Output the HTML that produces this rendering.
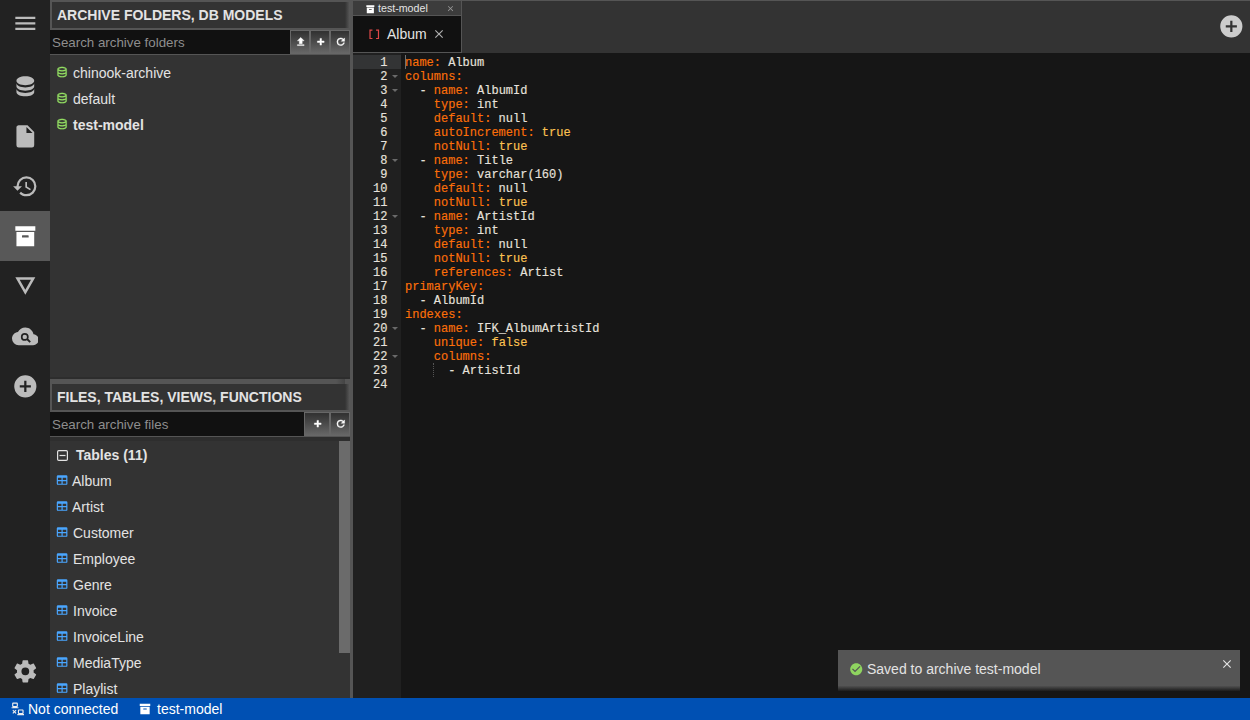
<!DOCTYPE html>
<html><head><meta charset="utf-8">
<style>
*{box-sizing:border-box;margin:0;padding:0}
html,body{width:1250px;height:720px;overflow:hidden;background:#333;font-family:"Liberation Sans",sans-serif;font-size:14px;color:#e3e3e3}
.abs{position:absolute}
svg{display:block}
#iconbar{left:0;top:0;width:50px;height:698px;background:#222}
.ib{position:absolute;left:0;width:50px;height:50px}
.ib svg{position:absolute;left:11.67px;top:11.67px;width:26.67px;height:26.67px;fill:#bbb}
#left{left:50px;top:0;width:300px;height:698px;background:#333}
.wtitle{position:absolute;left:0;width:300px;height:30px;border:2px solid #555;background:#333;font-weight:bold;text-transform:uppercase;padding-left:5px;line-height:26px;color:#e3e3e3}
.search{position:absolute;left:0;height:24px;background:#111;color:#8e8e8e;padding-left:2px;padding-top:1px;line-height:23px;font-size:13.33px}
.ibtn{position:absolute;height:24px;border:1px solid #676767;background:linear-gradient(to bottom,#333 5%,#676767 100%)}
.ibtn svg{position:absolute;width:14px;height:14px;fill:#fff;stroke:#fff;stroke-width:0.9px}
.item{position:absolute;left:0;height:26px;line-height:26px;white-space:nowrap}
.item svg{position:absolute;top:6.67px;width:13.33px;height:13.33px}
.dbi{fill:#92dc62;stroke:#92dc62;stroke-width:0.3px}
.tbi{fill:#4aa6ff}
svg.tbi{width:14.2px!important;height:14.2px!important}
svg.dbi{width:14.1px!important;height:14.1px!important}
#splitter{left:350px;top:0;width:3px;height:698px;background:#555}
#tabs{left:353px;top:0;width:897px;height:53px;background:#333;border-top:1px solid #555}
#editor{left:353px;top:53px;width:897px;height:645px;background:#161616}
#gutter{left:0;top:0;width:47.5px;height:645px;background:#202020}
.code{font-family:"Liberation Mono",monospace;font-size:12px;color:#e6e1dc;-webkit-text-stroke:0.15px}
.cl{position:absolute;left:52px;height:14px;line-height:16px;white-space:pre}
.k{color:#fc6f09}
.b{color:#fdc251}

.ln{position:absolute;left:0;width:47.5px;height:14px;line-height:14px}
.ln span{position:absolute;right:13px;line-height:16px}
.ln.act{background:#333435}
.fw{position:absolute;left:39px;top:6px;width:0;height:0;border-left:3px solid transparent;border-right:3px solid transparent;border-top:3.5px solid #6a6a6a}
#toast{left:838px;top:650px;width:402px;height:36px;background:#555;color:#e3e3e3}
#toastsh{left:838px;top:686px;width:402px;height:5px;background:linear-gradient(to bottom,#505050,#1c1c1c)}

#status{left:0;top:698px;width:1250px;height:22px;background:#0050b3;color:#fff}
</style></head><body>

<div id="iconbar" class="abs">
  <div class="ib" style="top:-1.2px"><svg viewBox="0 0 24 24"><path d="M3,6H21V8H3V6M3,11H21V13H3V11M3,16H21V18H3V16Z"/></svg></div>
  <div class="ib" style="top:61px"><svg viewBox="0 0 24 24"><path d="M12,3C7.58,3 4,4.79 4,7C4,9.21 7.58,11 12,11C16.42,11 20,9.21 20,7C20,4.79 16.42,3 12,3M4,9V12C4,14.21 7.58,16 12,16C16.42,16 20,14.21 20,12V9C20,11.21 16.42,13 12,13C7.58,13 4,11.21 4,9M4,14V17C4,19.21 7.58,21 12,21C16.42,21 20,19.21 20,17V14C20,16.21 16.42,18 12,18C7.58,18 4,16.21 4,14Z"/></svg></div>
  <div class="ib" style="top:111px"><svg viewBox="0 0 24 24"><path d="M13,9V3.5L18.5,9M6,2C4.89,2 4,2.89 4,4V20A2,2 0 0,0 6,22H18A2,2 0 0,0 20,20V8L14,2H6Z"/></svg></div>
  <div class="ib" style="top:161px"><svg viewBox="0 0 24 24"><path d="M13.5,8H12V13L16.28,15.54L17,14.33L13.5,12.25V8M13,3A9,9 0 0,0 4,12H1L4.96,16.03L9,12H6A7,7 0 0,1 13,5A7,7 0 0,1 20,12A7,7 0 0,1 13,19C11.07,19 9.32,18.21 8.06,16.94L6.64,18.36C8.27,20 10.5,21 13,21A9,9 0 0,0 22,12A9,9 0 0,0 13,3"/></svg></div>
  <div class="ib" style="top:211px;background:#585858"><svg viewBox="0 0 24 24" style="fill:#fff"><path d="M3,3H21V7H3V3M4,8H20V21H4V8M9.5,11A0.5,0.5 0 0,0 9,11.5V13H15V11.5A0.5,0.5 0 0,0 14.5,11H9.5Z"/></svg></div>
  <div class="ib" style="top:261px"><svg viewBox="0 0 24 24"><path d="M3,3.9H21L12,19.56Z M6.89,6.15L12,15.04L17.11,6.15Z" fill-rule="evenodd"/></svg></div>
  <div class="ib" style="top:311px"><svg viewBox="0 0 24 24"><path d="M12,4C15.64,4 18.67,6.59 19.35,10.04C21.95,10.22 24,12.36 24,15A5,5 0 0,1 19,20H6A6,6 0 0,1 0,14C0,10.91 2.34,8.36 5.35,8.04C6.6,5.64 9.11,4 12,4M11.5,9A3.5,3.5 0 0,0 8,12.5A3.5,3.5 0 0,0 11.5,16C12.2,16 12.86,15.79 13.42,15.43L15.8,17.8L17,16.6L14.62,14.23C14.86,13.7 15,13.12 15,12.5A3.5,3.5 0 0,0 11.5,9M11.5,10.5A2,2 0 0,1 13.5,12.5A2,2 0 0,1 11.5,14.5A2,2 0 0,1 9.5,12.5A2,2 0 0,1 11.5,10.5Z"/></svg></div>
  <div class="ib" style="top:361px"><svg viewBox="0 0 24 24"><path d="M17,13H13V17H11V13H7V11H11V7H13V11H17M12,2A10,10 0 0,0 2,12A10,10 0 0,0 12,22A10,10 0 0,0 22,12A10,10 0 0,0 12,2Z"/></svg></div>
  <div class="ib" style="top:646px"><svg viewBox="0 0 24 24"><path d="M12,15.5A3.5,3.5 0 0,1 8.5,12A3.5,3.5 0 0,1 12,8.5A3.5,3.5 0 0,1 15.5,12A3.5,3.5 0 0,1 12,15.5M19.43,12.97C19.47,12.65 19.5,12.33 19.5,12C19.5,11.67 19.47,11.34 19.43,11L21.54,9.37C21.73,9.22 21.78,8.95 21.66,8.73L19.66,5.27C19.54,5.05 19.27,4.96 19.05,5.05L16.56,6.05C16.04,5.66 15.5,5.32 14.87,5.07L14.5,2.42C14.46,2.18 14.25,2 14,2H10C9.750,2 9.54,2.18 9.5,2.42L9.13,5.07C8.5,5.32 7.96,5.66 7.44,6.05L4.95,5.05C4.73,4.96 4.46,5.05 4.34,5.27L2.34,8.73C2.21,8.95 2.27,9.22 2.46,9.37L4.57,11C4.53,11.34 4.5,11.67 4.5,12C4.5,12.33 4.53,12.65 4.57,12.97L2.46,14.63C2.27,14.78 2.21,15.05 2.34,15.27L4.34,18.73C4.46,18.95 4.73,19.030 4.95,18.95L7.44,17.94C7.96,18.34 8.5,18.68 9.13,18.93L9.5,21.58C9.54,21.82 9.75,22 10,22H14C14.25,22 14.46,21.82 14.5,21.58L14.87,18.93C15.5,18.67 16.04,18.34 16.56,17.94L19.05,18.95C19.27,19.03 19.54,18.95 19.66,18.73L21.66,15.27C21.78,15.05 21.73,14.78 21.54,14.63L19.43,12.97Z"/></svg></div>
</div>

<div id="left" class="abs">
  <div class="wtitle" style="top:0">Archive folders, DB models</div>
  <div class="search" style="top:30px;width:240px">Search archive folders</div>
  <div class="abs" style="left:0;top:54px;width:300px;height:1px;background:#555"></div>
  <div class="ibtn" style="left:240px;top:30px;width:20px"><svg viewBox="0 0 24 24" style="left:4.05px;top:4.6px;width:11.5px;height:11.5px"><path d="M9,16V10H5L12,3L19,10H15V16H9M5,20V18H19V20H5Z"/></svg></div>
  <div class="ibtn" style="left:260px;top:30px;width:20px"><svg viewBox="0 0 24 24" style="left:4.05px;top:4.6px;width:11.5px;height:11.5px"><path d="M19,13.6H13.6V19H10.4V13.6H5V10.4H10.4V5H13.6V10.4H19V13.6Z"/></svg></div>
  <div class="ibtn" style="left:280px;top:30px;width:20px"><svg viewBox="0 0 24 24" style="left:4.05px;top:4.6px;width:11.5px;height:11.5px"><path d="M17.65,6.35C16.2,4.9 14.21,4 12,4A8,8 0 0,0 4,12A8,8 0 0,0 12,20C15.73,20 18.84,17.45 19.73,14H17.65C16.83,16.33 14.61,18 12,18A6,6 0 0,1 6,12A6,6 0 0,1 12,6C13.66,6 15.14,6.69 16.22,7.78L13,11H20V4L17.65,6.35Z"/></svg></div>
  <div class="item" style="top:60px;left:23px"><svg viewBox="0 0 24 24" class="dbi" style="left:-18.45px;top:5.35px"><path d="M12,3C7.58,3 4,4.79 4,7V17C4,19.21 7.59,21 12,21C16.41,21 20,19.21 20,17V7C20,4.79 16.42,3 12,3M18,17C18,17.5 15.87,19 12,19C8.13,19 6,17.5 6,17V14.77C7.61,15.55 9.72,16 12,16C14.28,16 16.39,15.55 18,14.77V17M18,12.45C16.7,13.4 14.42,14 12,14C9.58,14 7.3,13.4 6,12.45V9.64C7.47,10.47 9.61,11 12,11C14.39,11 16.53,10.47 18,9.64V12.45M12,9C8.13,9 6,7.5 6,7C6,6.5 8.13,5 12,5C15.87,5 18,6.5 18,7C18,7.5 15.87,9 12,9Z"/></svg>chinook-archive</div>
  <div class="item" style="top:86px;left:23px"><svg viewBox="0 0 24 24" class="dbi" style="left:-18.45px;top:5.35px"><path d="M12,3C7.58,3 4,4.79 4,7V17C4,19.21 7.59,21 12,21C16.41,21 20,19.21 20,17V7C20,4.79 16.42,3 12,3M18,17C18,17.5 15.87,19 12,19C8.13,19 6,17.5 6,17V14.77C7.61,15.55 9.72,16 12,16C14.28,16 16.39,15.55 18,14.77V17M18,12.45C16.7,13.4 14.42,14 12,14C9.58,14 7.3,13.4 6,12.45V9.64C7.47,10.47 9.61,11 12,11C14.39,11 16.53,10.47 18,9.64V12.45M12,9C8.13,9 6,7.5 6,7C6,6.5 8.13,5 12,5C15.87,5 18,6.5 18,7C18,7.5 15.87,9 12,9Z"/></svg>default</div>
  <div class="item" style="top:112px;left:23px;font-weight:bold"><svg viewBox="0 0 24 24" class="dbi" style="left:-18.45px;top:5.35px"><path d="M12,3C7.58,3 4,4.79 4,7V17C4,19.21 7.59,21 12,21C16.41,21 20,19.21 20,17V7C20,4.79 16.42,3 12,3M18,17C18,17.5 15.87,19 12,19C8.13,19 6,17.5 6,17V14.77C7.61,15.55 9.72,16 12,16C14.28,16 16.39,15.55 18,14.77V17M18,12.45C16.7,13.4 14.42,14 12,14C9.58,14 7.3,13.4 6,12.45V9.64C7.47,10.47 9.61,11 12,11C14.39,11 16.53,10.47 18,9.64V12.45M12,9C8.13,9 6,7.5 6,7C6,6.5 8.13,5 12,5C15.87,5 18,6.5 18,7C18,7.5 15.87,9 12,9Z"/></svg>test-model</div>
  <div class="abs" style="left:0;top:377px;width:300px;height:2px;background:#2d2d2d"></div>
  <div class="abs" style="left:0;top:379px;width:300px;height:3px;background:#555"></div>
  <div class="wtitle" style="top:382px">Files, tables, views, functions</div>
  <div class="search" style="top:412px;width:254px">Search archive files</div>
  <div class="abs" style="left:0;top:436px;width:300px;height:1px;background:#555"></div>
  <div class="abs" style="left:0;top:437px;width:300px;height:4px;background:#2e2e2e"></div>
  <div class="ibtn" style="left:254px;top:412px;width:26px"><svg viewBox="0 0 24 24" style="left:7.05px;top:4.6px;width:11.5px;height:11.5px"><path d="M19,13.6H13.6V19H10.4V13.6H5V10.4H10.4V5H13.6V10.4H19V13.6Z"/></svg></div>
  <div class="ibtn" style="left:280px;top:412px;width:20px"><svg viewBox="0 0 24 24" style="left:4.05px;top:4.6px;width:11.5px;height:11.5px"><path d="M17.65,6.35C16.2,4.9 14.21,4 12,4A8,8 0 0,0 4,12A8,8 0 0,0 12,20C15.73,20 18.84,17.45 19.73,14H17.65C16.83,16.33 14.61,18 12,18A6,6 0 0,1 6,12A6,6 0 0,1 12,6C13.66,6 15.14,6.69 16.22,7.78L13,11H20V4L17.65,6.35Z"/></svg></div>
  <div class="item" style="top:442px;left:26px;font-weight:bold"><svg style="left:-19px;top:7.5px;width:11px;height:11px" viewBox="0 0 11 11"><rect x="0.6" y="0.6" width="9.8" height="9.8" rx="1.2" fill="none" stroke="#e3e3e3" stroke-width="1.2"/><rect x="2.5" y="4.9" width="6" height="1.2" fill="#e3e3e3"/></svg>Tables (11)</div>
  <div class="item" style="top:468px;left:22px"><svg viewBox="0 0 24 24" class="tbi" style="left:-17.2px;top:5.3px"><path d="M5,4H19A2,2 0 0,1 21,6V18A2,2 0 0,1 19,20H5A2,2 0 0,1 3,18V6A2,2 0 0,1 5,4M5,8V12H11V8H5M13,8V12H19V8H13M5,14V18H11V14H5M13,14V18H19V14H13Z"/></svg>Album</div>
  <div class="item" style="top:494px;left:22px"><svg viewBox="0 0 24 24" class="tbi" style="left:-17.2px;top:5.3px"><path d="M5,4H19A2,2 0 0,1 21,6V18A2,2 0 0,1 19,20H5A2,2 0 0,1 3,18V6A2,2 0 0,1 5,4M5,8V12H11V8H5M13,8V12H19V8H13M5,14V18H11V14H5M13,14V18H19V14H13Z"/></svg>Artist</div>
  <div class="item" style="top:520px;left:23px"><svg viewBox="0 0 24 24" class="tbi" style="left:-18.2px;top:5.3px"><path d="M5,4H19A2,2 0 0,1 21,6V18A2,2 0 0,1 19,20H5A2,2 0 0,1 3,18V6A2,2 0 0,1 5,4M5,8V12H11V8H5M13,8V12H19V8H13M5,14V18H11V14H5M13,14V18H19V14H13Z"/></svg>Customer</div>
  <div class="item" style="top:546px;left:23px"><svg viewBox="0 0 24 24" class="tbi" style="left:-18.2px;top:5.3px"><path d="M5,4H19A2,2 0 0,1 21,6V18A2,2 0 0,1 19,20H5A2,2 0 0,1 3,18V6A2,2 0 0,1 5,4M5,8V12H11V8H5M13,8V12H19V8H13M5,14V18H11V14H5M13,14V18H19V14H13Z"/></svg>Employee</div>
  <div class="item" style="top:572px;left:23px"><svg viewBox="0 0 24 24" class="tbi" style="left:-18.2px;top:5.3px"><path d="M5,4H19A2,2 0 0,1 21,6V18A2,2 0 0,1 19,20H5A2,2 0 0,1 3,18V6A2,2 0 0,1 5,4M5,8V12H11V8H5M13,8V12H19V8H13M5,14V18H11V14H5M13,14V18H19V14H13Z"/></svg>Genre</div>
  <div class="item" style="top:598px;left:23px"><svg viewBox="0 0 24 24" class="tbi" style="left:-18.2px;top:5.3px"><path d="M5,4H19A2,2 0 0,1 21,6V18A2,2 0 0,1 19,20H5A2,2 0 0,1 3,18V6A2,2 0 0,1 5,4M5,8V12H11V8H5M13,8V12H19V8H13M5,14V18H11V14H5M13,14V18H19V14H13Z"/></svg>Invoice</div>
  <div class="item" style="top:624px;left:23px"><svg viewBox="0 0 24 24" class="tbi" style="left:-18.2px;top:5.3px"><path d="M5,4H19A2,2 0 0,1 21,6V18A2,2 0 0,1 19,20H5A2,2 0 0,1 3,18V6A2,2 0 0,1 5,4M5,8V12H11V8H5M13,8V12H19V8H13M5,14V18H11V14H5M13,14V18H19V14H13Z"/></svg>InvoiceLine</div>
  <div class="item" style="top:650px;left:23px"><svg viewBox="0 0 24 24" class="tbi" style="left:-18.2px;top:5.3px"><path d="M5,4H19A2,2 0 0,1 21,6V18A2,2 0 0,1 19,20H5A2,2 0 0,1 3,18V6A2,2 0 0,1 5,4M5,8V12H11V8H5M13,8V12H19V8H13M5,14V18H11V14H5M13,14V18H19V14H13Z"/></svg>MediaType</div>
  <div class="item" style="top:676px;left:23px"><svg viewBox="0 0 24 24" class="tbi" style="left:-18.2px;top:5.3px"><path d="M5,4H19A2,2 0 0,1 21,6V18A2,2 0 0,1 19,20H5A2,2 0 0,1 3,18V6A2,2 0 0,1 5,4M5,8V12H11V8H5M13,8V12H19V8H13M5,14V18H11V14H5M13,14V18H19V14H13Z"/></svg>Playlist</div>
  <div class="abs" style="left:289px;top:441px;width:11px;height:212px;background:#6b6b6b"></div>
  <div class="abs" style="left:295px;top:2px;width:5px;height:26px;background:linear-gradient(to right,#333,#5a5a5a)"></div>
  <div class="abs" style="left:295px;top:384px;width:5px;height:26px;background:linear-gradient(to right,#333,#5a5a5a)"></div>
  <div class="abs" style="left:286px;top:379px;width:9px;height:5px;background:linear-gradient(to right,#555,#444)"></div>
</div>

<div id="splitter" class="abs"></div>

<div id="tabs" class="abs">
  <div class="abs" style="left:0;top:0;width:109px;height:14px;background:#3c3c3c;border-right:1px solid #555"></div>
  <div class="abs" style="left:11.7px;top:2.5px;width:8px;height:8px"><svg viewBox="0 0 24 24" style="width:10.7px;height:10.7px;fill:#fff"><path d="M3,3H21V7H3V3M4,8H20V21H4V8M9.5,11A0.5,0.5 0 0,0 9,11.5V13H15V11.5A0.5,0.5 0 0,0 14.5,11H9.5Z"/></svg></div>
  <div class="abs" style="left:25px;top:0;height:14px;line-height:14px;font-size:10.67px;color:#e3e3e3">test-model</div>
  <div class="abs" style="left:93px;top:3px"><svg viewBox="0 0 24 24" style="width:9px;height:9px;fill:#999"><path d="M19,6.41L17.59,5L12,10.59L6.41,5L5,6.41L10.59,12L5,17.59L6.41,19L12,13.41L17.59,19L19,17.59L13.41,12L19,6.41Z"/></svg></div>
  <div class="abs" style="left:0;top:14px;width:109px;height:1px;background:#555"></div>
  <div class="abs" style="left:0;top:15px;width:109px;height:36px;background:#111;border-right:1px solid #555"></div>
  <div class="abs" style="left:14px;top:25.5px"><svg viewBox="0 0 24 24" style="width:14.5px;height:14.5px;fill:#e04848"><path d="M15,4V6H18V18H15V20H20V4M4,4V20H9V18H6V6H9V4H4Z"/></svg></div>
  <div class="abs" style="left:34px;top:25px;height:16px;line-height:16px;font-size:14px;color:#e3e3e3">Album</div>
  <div class="abs" style="left:78.5px;top:26px"><svg viewBox="0 0 24 24" style="width:14px;height:14px;fill:#b0b0b0"><path d="M19,6.41L17.59,5L12,10.59L6.41,5L5,6.41L10.59,12L5,17.59L6.41,19L12,13.41L17.59,19L19,17.59L13.41,12L19,6.41Z"/></svg></div>
  <div class="abs" style="left:0;top:51px;width:109px;height:1px;background:#555"></div>
  <div class="abs" style="left:865px;top:12px"><svg viewBox="0 0 24 24" style="width:26.67px;height:26.67px;fill:#ccc"><path d="M17,13H13V17H11V13H7V11H11V7H13V11H17M12,2A10,10 0 0,0 2,12A10,10 0 0,0 12,22A10,10 0 0,0 22,12A10,10 0 0,0 12,2Z"/></svg></div>
</div>

<div id="editor" class="abs code">
  <div id="gutter" class="abs"></div>
<div class="ln act" style="top:2px"><span>1</span></div>
<div class="ln" style="top:16px"><span>2</span><i class="fw"></i></div>
<div class="ln" style="top:30px"><span>3</span><i class="fw"></i></div>
<div class="ln" style="top:44px"><span>4</span></div>
<div class="ln" style="top:58px"><span>5</span></div>
<div class="ln" style="top:72px"><span>6</span></div>
<div class="ln" style="top:86px"><span>7</span></div>
<div class="ln" style="top:100px"><span>8</span><i class="fw"></i></div>
<div class="ln" style="top:114px"><span>9</span></div>
<div class="ln" style="top:128px"><span>10</span></div>
<div class="ln" style="top:142px"><span>11</span></div>
<div class="ln" style="top:156px"><span>12</span><i class="fw"></i></div>
<div class="ln" style="top:170px"><span>13</span></div>
<div class="ln" style="top:184px"><span>14</span></div>
<div class="ln" style="top:198px"><span>15</span></div>
<div class="ln" style="top:212px"><span>16</span></div>
<div class="ln" style="top:226px"><span>17</span></div>
<div class="ln" style="top:240px"><span>18</span></div>
<div class="ln" style="top:254px"><span>19</span></div>
<div class="ln" style="top:268px"><span>20</span><i class="fw"></i></div>
<div class="ln" style="top:282px"><span>21</span></div>
<div class="ln" style="top:296px"><span>22</span><i class="fw"></i></div>
<div class="ln" style="top:310px"><span>23</span></div>
<div class="ln" style="top:324px"><span>24</span></div>
<div class="cl" style="top:2px"><span class="k">name:</span> Album</div>
<div class="cl" style="top:16px"><span class="k">columns:</span></div>
<div class="cl" style="top:30px">  - <span class="k">name:</span> AlbumId</div>
<div class="cl" style="top:44px">    <span class="k">type:</span> int</div>
<div class="cl" style="top:58px">    <span class="k">default:</span> null</div>
<div class="cl" style="top:72px">    <span class="k">autoIncrement:</span> <span class="b">true</span></div>
<div class="cl" style="top:86px">    <span class="k">notNull:</span> <span class="b">true</span></div>
<div class="cl" style="top:100px">  - <span class="k">name:</span> Title</div>
<div class="cl" style="top:114px">    <span class="k">type:</span> varchar(160)</div>
<div class="cl" style="top:128px">    <span class="k">default:</span> null</div>
<div class="cl" style="top:142px">    <span class="k">notNull:</span> <span class="b">true</span></div>
<div class="cl" style="top:156px">  - <span class="k">name:</span> ArtistId</div>
<div class="cl" style="top:170px">    <span class="k">type:</span> int</div>
<div class="cl" style="top:184px">    <span class="k">default:</span> null</div>
<div class="cl" style="top:198px">    <span class="k">notNull:</span> <span class="b">true</span></div>
<div class="cl" style="top:212px">    <span class="k">references:</span> Artist</div>
<div class="cl" style="top:226px"><span class="k">primaryKey:</span></div>
<div class="cl" style="top:240px">  - AlbumId</div>
<div class="cl" style="top:254px"><span class="k">indexes:</span></div>
<div class="cl" style="top:268px">  - <span class="k">name:</span> IFK_AlbumArtistId</div>
<div class="cl" style="top:282px">    <span class="k">unique:</span> <span class="b">false</span></div>
<div class="cl" style="top:296px">    <span class="k">columns:</span></div>
<div class="cl" style="top:310px">      - ArtistId</div>
<div class="cl" style="top:324px"></div>
<div class="abs" style="left:52px;top:2px;width:1px;height:14px;background:#707070"></div>
<div class="abs" style="left:80px;top:310px;width:1px;height:14px;border-left:1px dotted #555"></div>
</div>

<div id="status" class="abs">
  <div class="abs" style="left:10.6px;top:3.9px"><svg viewBox="0 0 24 24" style="width:13.75px;height:13.75px;fill:#eee"><path d="M4,1C2.89,1 2,1.89 2,3V7C2,8.11 2.89,9 4,9H1V11H13V9H10C11.11,9 12,8.11 12,7V3C12,1.89 11.11,1 10,1H4M4,3H10V7H4V3M14,13C12.89,13 12,13.89 12,15V19C12,20.11 12.89,21 14,21H11V23H23V21H20C21.11,21 22,20.11 22,19V15C22,13.89 21.11,13 20,13H14M3.88,13.46L2.46,14.88L4.59,17L2.46,19.12L3.88,20.54L6,18.41L8.12,20.54L9.54,19.12L7.41,17L9.54,14.88L8.12,13.460L6,15.59L3.88,13.46M14,15H20V19H14V15Z"/></svg></div>
  <div class="abs" style="left:28px;top:0;line-height:22px">Not connected</div>
  <div class="abs" style="left:138px;top:4px"><svg viewBox="0 0 24 24" style="width:14px;height:14px;fill:#fff"><path d="M3,3H21V7H3V3M4,8H20V21H4V8M9.5,11A0.5,0.5 0 0,0 9,11.5V13H15V11.5A0.5,0.5 0 0,0 14.5,11H9.5Z"/></svg></div>
  <div class="abs" style="left:157px;top:0;line-height:22px">test-model</div>
</div>
<div id="toast" class="abs">
  <div class="abs" style="left:10.5px;top:11.75px"><svg viewBox="0 0 24 24" style="width:14.5px;height:14.5px;fill:#8fd460"><path d="M12 2C6.5 2 2 6.5 2 12S6.5 22 12 22 22 17.5 22 12 17.5 2 12 2M10 17L5 12L6.41 10.59L10 14.17L17.59 6.58L19 8L10 17Z"/></svg></div>
  <div class="abs" style="left:29px;top:10px;line-height:18px">Saved to archive test-model</div>
  <div class="abs" style="left:382px;top:7px"><svg viewBox="0 0 24 24" style="width:14px;height:14px;fill:#e3e3e3"><path d="M19,6.41L17.59,5L12,10.59L6.41,5L5,6.41L10.59,12L5,17.59L6.41,19L12,13.41L17.59,19L19,17.59L13.41,12L19,6.41Z"/></svg></div>
</div>
<div id="toastsh" class="abs"></div>

</body></html>
